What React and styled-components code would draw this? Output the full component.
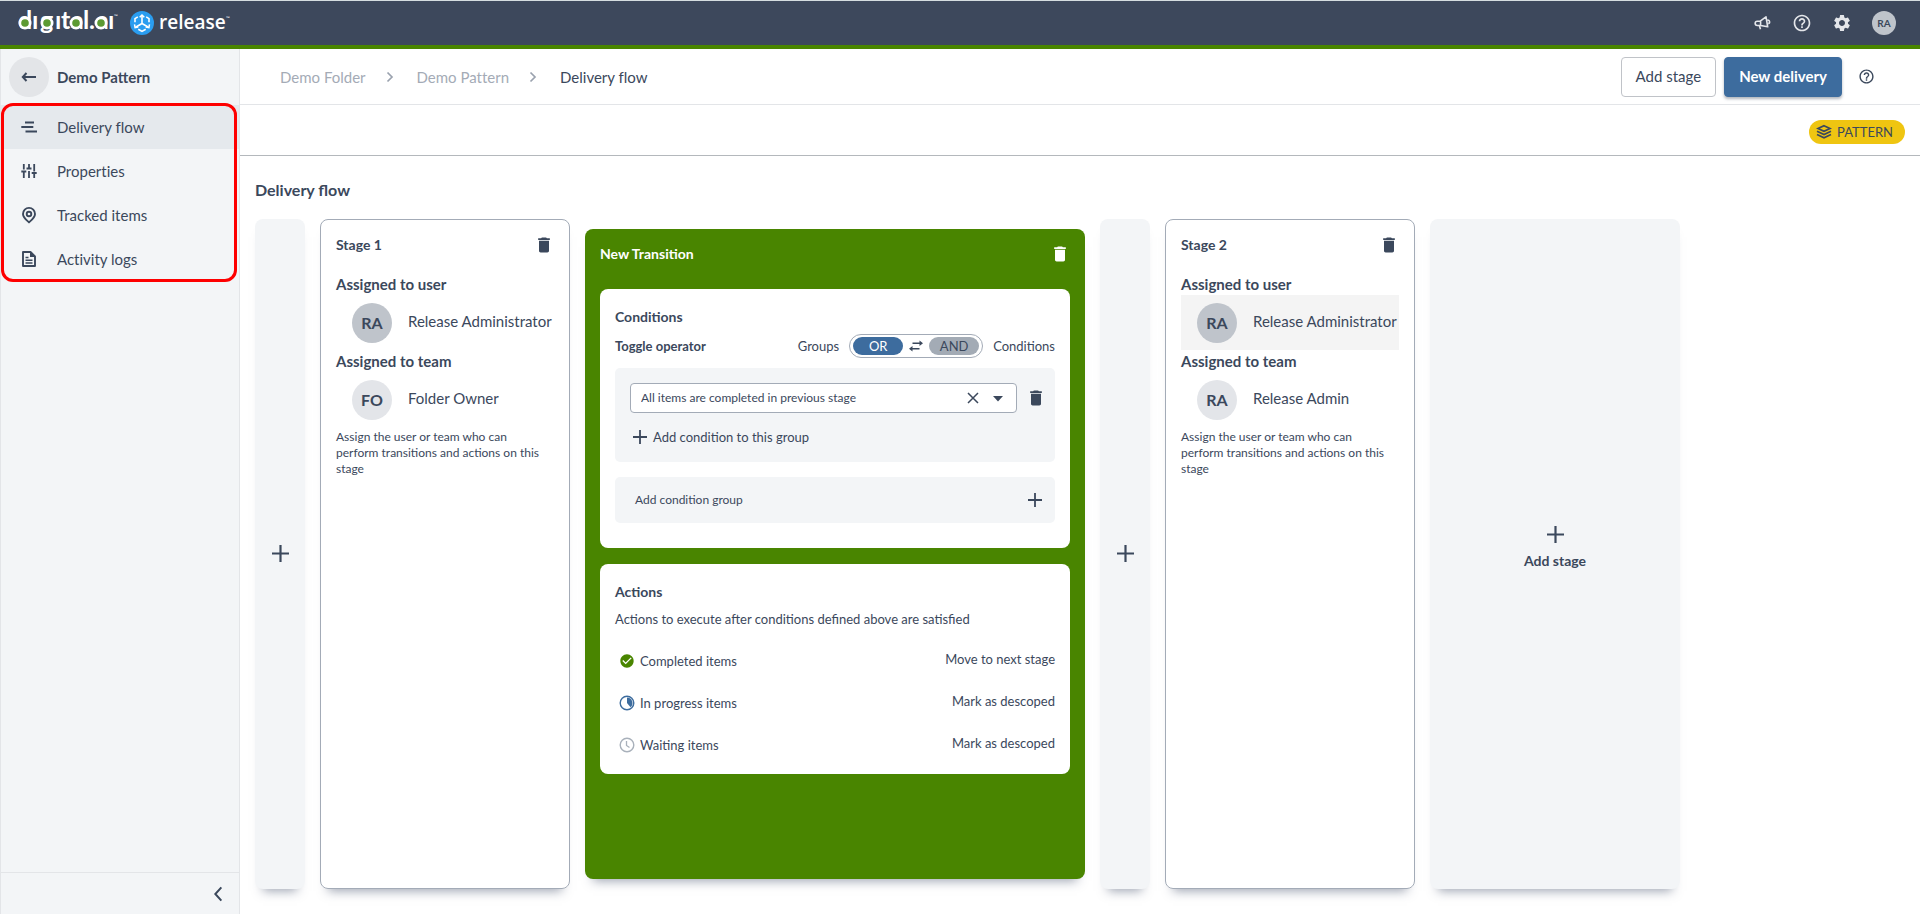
import styled, { createGlobalStyle } from "styled-components";
import {
  MdDelete,
  MdHelpOutline,
  MdSettings,
  MdCheckCircle
} from "react-icons/md";

const TEXT = "#3b485c";
const GREEN = "#498500";
const BLUE = "#3d6c9e";
const LIGHT = "#f3f5f7";

const GlobalStyle = createGlobalStyle`
  * {
    box-sizing: border-box;
  }
  body {
    margin: 0;
    background: #fff;
    color: ${TEXT};
    font-family: Lato, "Liberation Sans", sans-serif;
    font-size: 13px;
    line-height: 20px;
  }
  button, select {
    font: inherit;
    color: inherit;
  }
  svg {
    display: block;
    flex-shrink: 0;
  }
  h1, h2, h3, h4, p, ul, ol {
    margin: 0;
    padding: 0;
    list-style: none;
  }
`;

const Page = styled.div`
  min-height: 100vh;
  display: flex;
  flex-direction: column;
`;

const Header = styled.header`
  height: 49px;
  padding: 0 24px 0 18px;
  display: flex;
  align-items: center;
  justify-content: space-between;
  background: #3d485c;
  border-top: 1px solid #d5dde0;
  border-bottom: 4px solid ${GREEN};
`;

const Brand = styled.a`
  display: flex;
  align-items: center;
  color: #fff;
  text-decoration: none;
`;

const HeaderActions = styled.div`
  display: flex;
  align-items: center;
  gap: 20px;
  color: #e4e6ea;
`;

const IconButton = styled.button`
  display: flex;
  align-items: center;
  justify-content: center;
  width: ${props => props.$size || 20}px;
  height: ${props => props.$size || 20}px;
  flex-shrink: 0;
  padding: 0;
  border: 0;
  border-radius: 50%;
  background: ${props => props.$background || "none"};
`;

const Avatar = styled.span`
  display: flex;
  align-items: center;
  justify-content: center;
  flex-shrink: 0;
  width: ${props => (props.$small ? 24 : 40)}px;
  height: ${props => (props.$small ? 24 : 40)}px;
  border-radius: 50%;
  background: ${props => (props.$team ? "#e3e5e9" : "#bfc4cb")};
  color: ${TEXT};
  font-size: ${props => (props.$small ? 10 : 16)}px;
  font-weight: 700;
`;

const Body = styled.div`
  flex: 1;
  display: flex;
`;

const Sidebar = styled.aside`
  width: 240px;
  flex-shrink: 0;
  display: flex;
  flex-direction: column;
  background: ${LIGHT};
  border-left: 1px solid #e3e5e8;
  border-right: 1px solid #e3e5e8;
`;

const SidebarTitle = styled.div`
  height: 56px;
  padding: 0 8px;
  display: flex;
  align-items: center;
  gap: 8px;
  font-size: 15px;
  font-weight: 700;
`;

const Nav = styled.nav`
  position: relative;

  /* red frame that lies over the menu */
  &::after {
    content: "";
    position: absolute;
    inset: -2px 2px -1px 0;
    border: 3px solid #fe0000;
    border-radius: 12px;
    pointer-events: none;
  }
`;

const NavLink = styled.a`
  height: 44px;
  padding: 0 19px;
  display: flex;
  align-items: center;
  gap: 19px;
  background: ${props => (props.$active ? "#e5e9ed" : "none")};
  color: ${TEXT};
  font-size: 15px;
  font-variant-ligatures: none;
  text-decoration: none;
`;

const SidebarFooter = styled.div`
  height: 42px;
  margin-top: auto;
  padding: 0 11px;
  display: flex;
  align-items: center;
  justify-content: flex-end;
  border-top: 1px solid #e3e5e8;
`;

const Main = styled.main`
  flex: 1;
  min-width: 0;
  display: flex;
  flex-direction: column;
`;

const TopBar = styled.div`
  height: 56px;
  padding: 0 38px 0 40px;
  display: flex;
  align-items: center;
  justify-content: space-between;
  border-bottom: 1px solid #e3e5e8;
`;

const Breadcrumbs = styled.ol`
  display: flex;
  align-items: center;
  gap: 21px;
  font-size: 15px;
  font-variant-ligatures: none;

  li {
    display: flex;
    align-items: center;
    gap: 18px;
    color: #a4abb6;
  }
  a {
    color: #a4abb6;
    text-decoration: none;
  }
  li:last-child {
    color: ${TEXT};
  }
`;

const TopActions = styled.div`
  display: flex;
  align-items: center;
  gap: 8px;
`;

const Button = styled.button`
  height: 40px;
  padding: 0 14px 2px;
  border: 1px solid ${props => (props.$primary ? BLUE : "#c0c3c8")};
  border-radius: 4px;
  background: ${props => (props.$primary ? BLUE : "#fff")};
  color: ${props => (props.$primary ? "#fff" : TEXT)};
  font-size: 15px;
  font-weight: ${props => (props.$primary ? 700 : 400)};
  box-shadow: ${props =>
    props.$primary ? "0 2px 3px rgba(60, 72, 92, 0.4)" : "none"};
`;

const Toolbar = styled.div`
  height: 51px;
  padding: 4px 15px 0;
  display: flex;
  align-items: center;
  justify-content: flex-end;
  border-bottom: 1px solid #b4b8bc;
`;

const Badge = styled.span`
  height: 24px;
  padding: 0 12px 0 7px;
  display: flex;
  align-items: center;
  gap: 5px;
  border-radius: 12px;
  background: #efc511;
`;

const Content = styled.section`
  flex: 1;
  padding: 24px 15px 25px;
  display: flex;
  flex-direction: column;
  gap: 19px;
`;

const PageTitle = styled.h1`
  font-size: 16px;
  font-weight: 700;
  line-height: 20px;
`;

const Board = styled.div`
  flex: 1;
  display: flex;
  gap: 15px;
`;

const shadow = "0 10px 10px -8px rgba(60, 72, 100, 0.5)";

const AddColumn = styled.button`
  width: ${props => (props.$wide ? 250 : 50)}px;
  flex-shrink: 0;
  padding: ${props => (props.$wide ? "0 0 12px" : "0 0 2px")};
  display: flex;
  flex-direction: column;
  align-items: center;
  justify-content: center;
  gap: 8px;
  border: 0;
  border-radius: 8px;
  background: ${LIGHT};
  box-shadow: ${shadow};
  font-size: 14px;
  font-weight: 700;
`;

const StageCard = styled.section`
  width: 250px;
  flex-shrink: 0;
  padding: 15px;
  border: 1px solid #a3abb7;
  border-radius: 8px;
  box-shadow: ${shadow};
`;

const CardHeader = styled.div`
  display: flex;
  align-items: center;
  justify-content: space-between;
  height: 20px;
`;

const CardTitle = styled.h2`
  font-size: 14px;
  font-weight: 700;
  line-height: 20px;
`;

const StageBody = styled.div`
  padding-top: 18px;
`;

const FieldLabel = styled.h3`
  font-size: 15px;
  font-weight: 700;
  line-height: 22px;
`;

const Assignee = styled.div`
  height: 55px;
  padding-left: 16px;
  display: flex;
  align-items: center;
  gap: 16px;
  background: ${props => (props.$hovered ? "#f4f4f4" : "none")};
  font-size: 15px;
  white-space: nowrap;
`;

const AssigneeName = styled.span`
  padding-bottom: 4px;
`;

const Help = styled.p`
  padding: 2px 8px 0 0;
  font-size: 12px;
  line-height: 16px;
`;

const TransitionCard = styled.section`
  width: 500px;
  flex-shrink: 0;
  margin: 10px 0;
  padding: 15px;
  border-radius: 8px;
  background: ${GREEN};
  box-shadow: ${shadow};
  color: #fff;
`;

const Panel = styled.div`
  padding: 18px 15px ${props => (props.$compact ? 8 : 25)}px;
  border-radius: 8px;
  background: #fff;
  color: ${TEXT};
`;

const Panels = styled.div`
  margin-top: 25px;
  display: flex;
  flex-direction: column;
  gap: 16px;
`;

const OperatorRow = styled.div`
  height: 24px;
  margin: 7px 0 10px;
  display: flex;
  align-items: center;
  gap: 10px;

  strong {
    flex: 1;
  }
`;

const OperatorToggle = styled.button`
  height: 24px;
  padding: 0 3px;
  display: flex;
  align-items: center;
  gap: 6px;
  border: 1px solid #a3abb7;
  border-radius: 12px;
  background: #fff;
`;

const Operator = styled.span`
  width: 50px;
  height: 18px;
  line-height: 18px;
  border-radius: 9px;
  text-align: center;
  background: ${props => (props.$on ? BLUE : "#a3abb5")};
  color: ${props => (props.$on ? "#fff" : TEXT)};
`;

const Group = styled.div`
  height: 94px;
  padding: 15px 9px 15px 15px;
  border-radius: 5px;
  background: ${LIGHT};
`;

const ConditionRow = styled.div`
  display: flex;
  align-items: center;
  gap: 9px;
`;

const SelectBox = styled.div`
  flex: 1;
  height: 30px;
  padding: 0 8px 0 10px;
  display: flex;
  align-items: center;
  gap: 5px;
  border: 1px solid #a3abb7;
  border-radius: 4px;
  background: #fff;

  select {
    flex: 1;
    padding: 0;
    border: 0;
    background: none;
    appearance: none;
    font-size: 12px;
  }
`;

const TextButton = styled.button`
  margin-top: 14px;
  padding: 0 3px;
  display: flex;
  align-items: center;
  gap: 6px;
  border: 0;
  background: none;
`;

const AddGroup = styled.button`
  width: 100%;
  height: 46px;
  margin-top: 15px;
  padding: 0 13px 0 20px;
  display: flex;
  align-items: center;
  justify-content: space-between;
  border: 0;
  border-radius: 5px;
  background: ${LIGHT};
  font-size: 12px;
`;

const Description = styled.p`
  padding: 7px 0 11px;
`;

const ActionRow = styled.li`
  height: 42px;
  padding-left: 4px;
  display: flex;
  align-items: center;
  justify-content: space-between;
`;

const ActionName = styled.span`
  display: flex;
  align-items: center;
  gap: 5px;
`;

const ActionValue = styled.span`
  padding-bottom: 4px;
`;

const Plus = ({ size = 14 }) => (
  <svg width={size} height={size} viewBox="0 0 14 14">
    <path d="M7 0v14M0 7h14" stroke={TEXT} strokeWidth="1.8" />
  </svg>
);

const BackIcon = () => (
  <svg width="16" height="16" viewBox="0 0 16 16">
    <path
      d="M15 8H2M5.500 4 1.800 8l3.700 4"
      fill="none"
      stroke={TEXT}
      strokeWidth="2"
    />
  </svg>
);

const FlowIcon = () => (
  <svg width="18" height="18" viewBox="0 0 18 18">
    <path
      d="M5 4.500h9M1.300 9h12M5.500 13.500h11.500"
      stroke={TEXT}
      strokeWidth="1.800"
    />
  </svg>
);

const SlidersIcon = () => (
  <svg width="18" height="18" viewBox="0 0 18 18">
    <path
      d="M3.800 2v5.500M1.300 9.500h5M3.800 9.500V16M9 2v4.500M6.500 6.500h5M9 9v7M14.200 2v7.500M11.700 11h5M14.200 11V16"
      fill="none"
      stroke={TEXT}
      strokeWidth="1.800"
    />
  </svg>
);

const PinIcon = () => (
  <svg width="18" height="18" viewBox="0 0 18 18">
    <path
      d="M9 1.900a6 6 0 0 0-6 6C3 11.500 7 14.500 9 16.300 11 14.500 15 11.500 15 7.900a6 6 0 0 0-6-6z"
      fill="none"
      stroke={TEXT}
      strokeWidth="1.900"
    />
    <circle cx="9" cy="8" r="2.300" fill="none" stroke={TEXT} strokeWidth="1.900" />
  </svg>
);

const LogIcon = () => (
  <svg width="18" height="18" viewBox="0 0 18 18">
    <path
      d="M3 2h7.500L15 6.500V16H3z"
      fill="none"
      stroke={TEXT}
      strokeWidth="1.900"
      strokeLinejoin="round"
    />
    <path d="M10 2v5h5z" fill={TEXT} />
    <path d="M5.500 7.500h3M5.500 10.200h7M5.500 13h7" stroke={TEXT} strokeWidth="1.500" />
  </svg>
);

const Chevron = ({ left, color = "#9aa2ae", size = 12 }) => (
  <svg width={size} height={size} viewBox="0 0 12 12">
    <path
      d={left ? "M8.500 1 4 6l4.500 5" : "M3.500 1.500 8 6l-4.500 4.500"}
      fill="none"
      stroke={color}
      strokeWidth={left ? 1.5 : 1.7}
    />
  </svg>
);

const MegaphoneIcon = () => (
  <svg width="18" height="18" viewBox="0 0 18 18">
    <path
      d="M4.300 7.200h2.900L13 2.800l1.700 10-7-1.300H4.300a2.150 2.150 0 0 1 0-4.300zM7.600 7.400v4M6.300 11.500l1.200 3.800M14.500 6.200a1.700 1.700 0 0 1 .700 3.400"
      fill="none"
      stroke="currentColor"
      strokeWidth="1.600"
      strokeLinejoin="round"
    />
  </svg>
);

const LayersIcon = () => (
  <svg width="16" height="16" viewBox="0 0 16 16">
    <path
      d="M8 1.700 14 4.500 8 7.300 2 4.500z"
      fill="none"
      stroke={TEXT}
      strokeWidth="1.700"
    />
    <path
      d="M1 7.300 8 10.600l7-3.300M1 10.500 8 13.800l7-3.300"
      fill="none"
      stroke={TEXT}
      strokeWidth="1.700"
    />
  </svg>
);

const SwapIcon = () => (
  <svg width="14" height="12" viewBox="0 0 14 12">
    <path d="M3.500 3.200H11M3 8.800h7.500" stroke={TEXT} strokeWidth="1.400" />
    <path d="M10.500.500 14 3.200l-3.500 2.700zM3.500 6.100 0 8.800l3.500 2.700z" fill={TEXT} />
  </svg>
);

const CloseIcon = () => (
  <svg width="12" height="12" viewBox="0 0 12 12">
    <path d="M1 1l10 10M11 1 1 11" stroke={TEXT} strokeWidth="1.500" />
  </svg>
);

const CaretIcon = () => (
  <svg width="10" height="8" viewBox="0 0 10 8">
    <path d="M0 2h10L5 7.500z" fill={TEXT} />
  </svg>
);

const ProgressIcon = () => (
  <svg width="16" height="16" viewBox="0 0 16 16">
    <circle cx="8" cy="8" r="6.800" fill="none" stroke={BLUE} strokeWidth="1.400" />
    <path d="M8 2.500A5.500 5.500 0 0 1 11.500 12.200L8 8z" fill={BLUE} />
  </svg>
);

const WaitingIcon = () => (
  <svg width="16" height="16" viewBox="0 0 16 16">
    <circle cx="8" cy="8" r="6.800" fill="none" stroke="#a9b1bb" strokeWidth="1.400" />
    <path d="M7.500 4v4.500l3 2" fill="none" stroke="#a9b1bb" strokeWidth="1.300" />
  </svg>
);

// centres of the round bowls in the company name
const BOWLS = [7, 29, 58, 83];

const Logo = () => (
  <svg width="216" height="36" viewBox="0 0 216 36" fill="#fff">
    <text
      x="0 14 22 37 43 53 65 71 78 90"
      y="24"
      fontFamily="Lato, sans-serif"
      fontSize="25"
      fontWeight="700"
    >
      dıgıtal.aı
    </text>
    {BOWLS.map(cx => (
      <g key={cx}>
        <circle cx={cx} cy="18" r="6.500" />
        <circle cx={cx} cy="18" r="3.800" fill="#5c9a32" />
      </g>
    ))}
    <text x="96" y="13" fontFamily="Lato, sans-serif" fontSize="5">
      ™
    </text>
    <circle cx="124" cy="18" r="12" fill="#2a9df0" />
    <g fill="none" stroke="#fff">
      <path
        d="M124 18.500V11M124 18.500l-6 3.500M124 18.500l6 3.500"
        strokeWidth="1.600"
      />
      <path
        d="M121.700 12.300l2.300-2.300 2.300 2.300M116.500 19.300l.600 3.300 3.200-.600M131.500 19.300l-.600 3.300-3.200-.600"
        strokeWidth="1.500"
      />
      <path
        d="M119.800 11.900l-2.800 1.700v3.600M128.200 11.900l2.800 1.700v3.600M120.300 24.300l3.700 2.100 3.700-2.100"
        strokeWidth="1.600"
      />
    </g>
    <text
      x="141"
      y="24"
      fontFamily="Open Sans, sans-serif"
      fontSize="19"
      fontWeight="600"
    >
      release
    </text>
    <text x="208" y="15" fontFamily="Lato, sans-serif" fontSize="5">
      ™
    </text>
  </svg>
);

const NAV = [
  { label: "Delivery flow", Icon: FlowIcon, active: true },
  { label: "Properties", Icon: SlidersIcon },
  { label: "Tracked items", Icon: PinIcon },
  { label: "Activity logs", Icon: LogIcon }
];

const ACTIONS = [
  {
    name: "Completed items",
    value: "Move to next stage",
    icon: <MdCheckCircle size={16} color={GREEN} />
  },
  { name: "In progress items", value: "Mark as descoped", icon: <ProgressIcon /> },
  { name: "Waiting items", value: "Mark as descoped", icon: <WaitingIcon /> }
];

const AddStrip = () => (
  <AddColumn aria-label="Add transition">
    <Plus size={17} />
  </AddColumn>
);

function Stage({ title, user, team, hovered }) {
  return (
    <StageCard>
      <CardHeader>
        <CardTitle>{title}</CardTitle>
        <IconButton aria-label={`Delete ${title}`}>
          <MdDelete size={20} />
        </IconButton>
      </CardHeader>
      <StageBody>
        <FieldLabel>Assigned to user</FieldLabel>
        <Assignee $hovered={hovered}>
          <Avatar>{user.initials}</Avatar>
          <AssigneeName>{user.name}</AssigneeName>
        </Assignee>
        <FieldLabel>Assigned to team</FieldLabel>
        <Assignee>
          <Avatar $team>{team.initials}</Avatar>
          <AssigneeName>{team.name}</AssigneeName>
        </Assignee>
        <Help>
          Assign the user or team who can perform transitions and actions on
          this stage
        </Help>
      </StageBody>
    </StageCard>
  );
}

function Transition() {
  return (
    <TransitionCard>
      <CardHeader>
        <CardTitle>New Transition</CardTitle>
        <IconButton aria-label="Delete transition">
          <MdDelete size={20} color="#fff" />
        </IconButton>
      </CardHeader>
      <Panels>
        <Panel>
          <CardTitle>Conditions</CardTitle>
          <OperatorRow>
            <strong>Toggle operator</strong>
            <span>Groups</span>
            <OperatorToggle role="switch" aria-checked="true">
              <Operator $on>OR</Operator>
              <SwapIcon />
              <Operator>AND</Operator>
            </OperatorToggle>
            <span>Conditions</span>
          </OperatorRow>
          <Group>
            <ConditionRow>
              <SelectBox>
                <select aria-label="Condition">
                  <option>All items are completed in previous stage</option>
                </select>
                <IconButton aria-label="Clear condition">
                  <CloseIcon />
                </IconButton>
                <IconButton aria-label="Open conditions">
                  <CaretIcon />
                </IconButton>
              </SelectBox>
              <IconButton aria-label="Delete condition">
                <MdDelete size={20} />
              </IconButton>
            </ConditionRow>
            <TextButton>
              <Plus />
              Add condition to this group
            </TextButton>
          </Group>
          <AddGroup>
            Add condition group
            <Plus />
          </AddGroup>
        </Panel>
        <Panel $compact>
          <CardTitle>Actions</CardTitle>
          <Description>
            Actions to execute after conditions defined above are satisfied
          </Description>
          <ul>
            {ACTIONS.map(({ name, value, icon }) => (
              <ActionRow key={name}>
                <ActionName>
                  {icon}
                  {name}
                </ActionName>
                <ActionValue>{value}</ActionValue>
              </ActionRow>
            ))}
          </ul>
        </Panel>
      </Panels>
    </TransitionCard>
  );
}

function App() {
  return (
    <Page>
      <GlobalStyle />
      <Header>
        <Brand href="#" aria-label="digital.ai release">
          <Logo />
        </Brand>
        <HeaderActions>
          <IconButton aria-label="Announcements">
            <MegaphoneIcon />
          </IconButton>
          <IconButton aria-label="Help">
            <MdHelpOutline size={20} color="#e4e6ea" />
          </IconButton>
          <IconButton aria-label="Settings">
            <MdSettings size={20} color="#e4e6ea" />
          </IconButton>
          <Avatar $small>RA</Avatar>
        </HeaderActions>
      </Header>
      <Body>
        <Sidebar>
          <SidebarTitle>
            <IconButton $size={40} $background="#e3e5e8" aria-label="Back">
              <BackIcon />
            </IconButton>
            Demo Pattern
          </SidebarTitle>
          <Nav>
            {NAV.map(({ label, Icon, active }) => (
              <NavLink key={label} href="#" $active={active}>
                <Icon />
                {label}
              </NavLink>
            ))}
          </Nav>
          <SidebarFooter>
            <IconButton aria-label="Collapse menu">
              <Chevron left color={TEXT} size={16} />
            </IconButton>
          </SidebarFooter>
        </Sidebar>
        <Main>
          <TopBar>
            <Breadcrumbs>
              <li>
                <a href="#">Demo Folder</a>
                <Chevron />
              </li>
              <li>
                <a href="#">Demo Pattern</a>
                <Chevron />
              </li>
              <li>Delivery flow</li>
            </Breadcrumbs>
            <TopActions>
              <Button>Add stage</Button>
              <Button $primary>New delivery</Button>
              <IconButton aria-label="Page help" $size={32}>
                <MdHelpOutline size={17} />
              </IconButton>
            </TopActions>
          </TopBar>
          <Toolbar>
            <Badge>
              <LayersIcon />
              PATTERN
            </Badge>
          </Toolbar>
          <Content>
            <PageTitle>Delivery flow</PageTitle>
            <Board>
              <AddStrip />
              <Stage
                title="Stage 1"
                user={{ initials: "RA", name: "Release Administrator" }}
                team={{ initials: "FO", name: "Folder Owner" }}
              />
              <Transition />
              <AddStrip />
              <Stage
                title="Stage 2"
                user={{ initials: "RA", name: "Release Administrator" }}
                team={{ initials: "RA", name: "Release Admin" }}
                hovered
              />
              <AddColumn $wide>
                <Plus size={17} />
                Add stage
              </AddColumn>
            </Board>
          </Content>
        </Main>
      </Body>
    </Page>
  );
}

export default App;
